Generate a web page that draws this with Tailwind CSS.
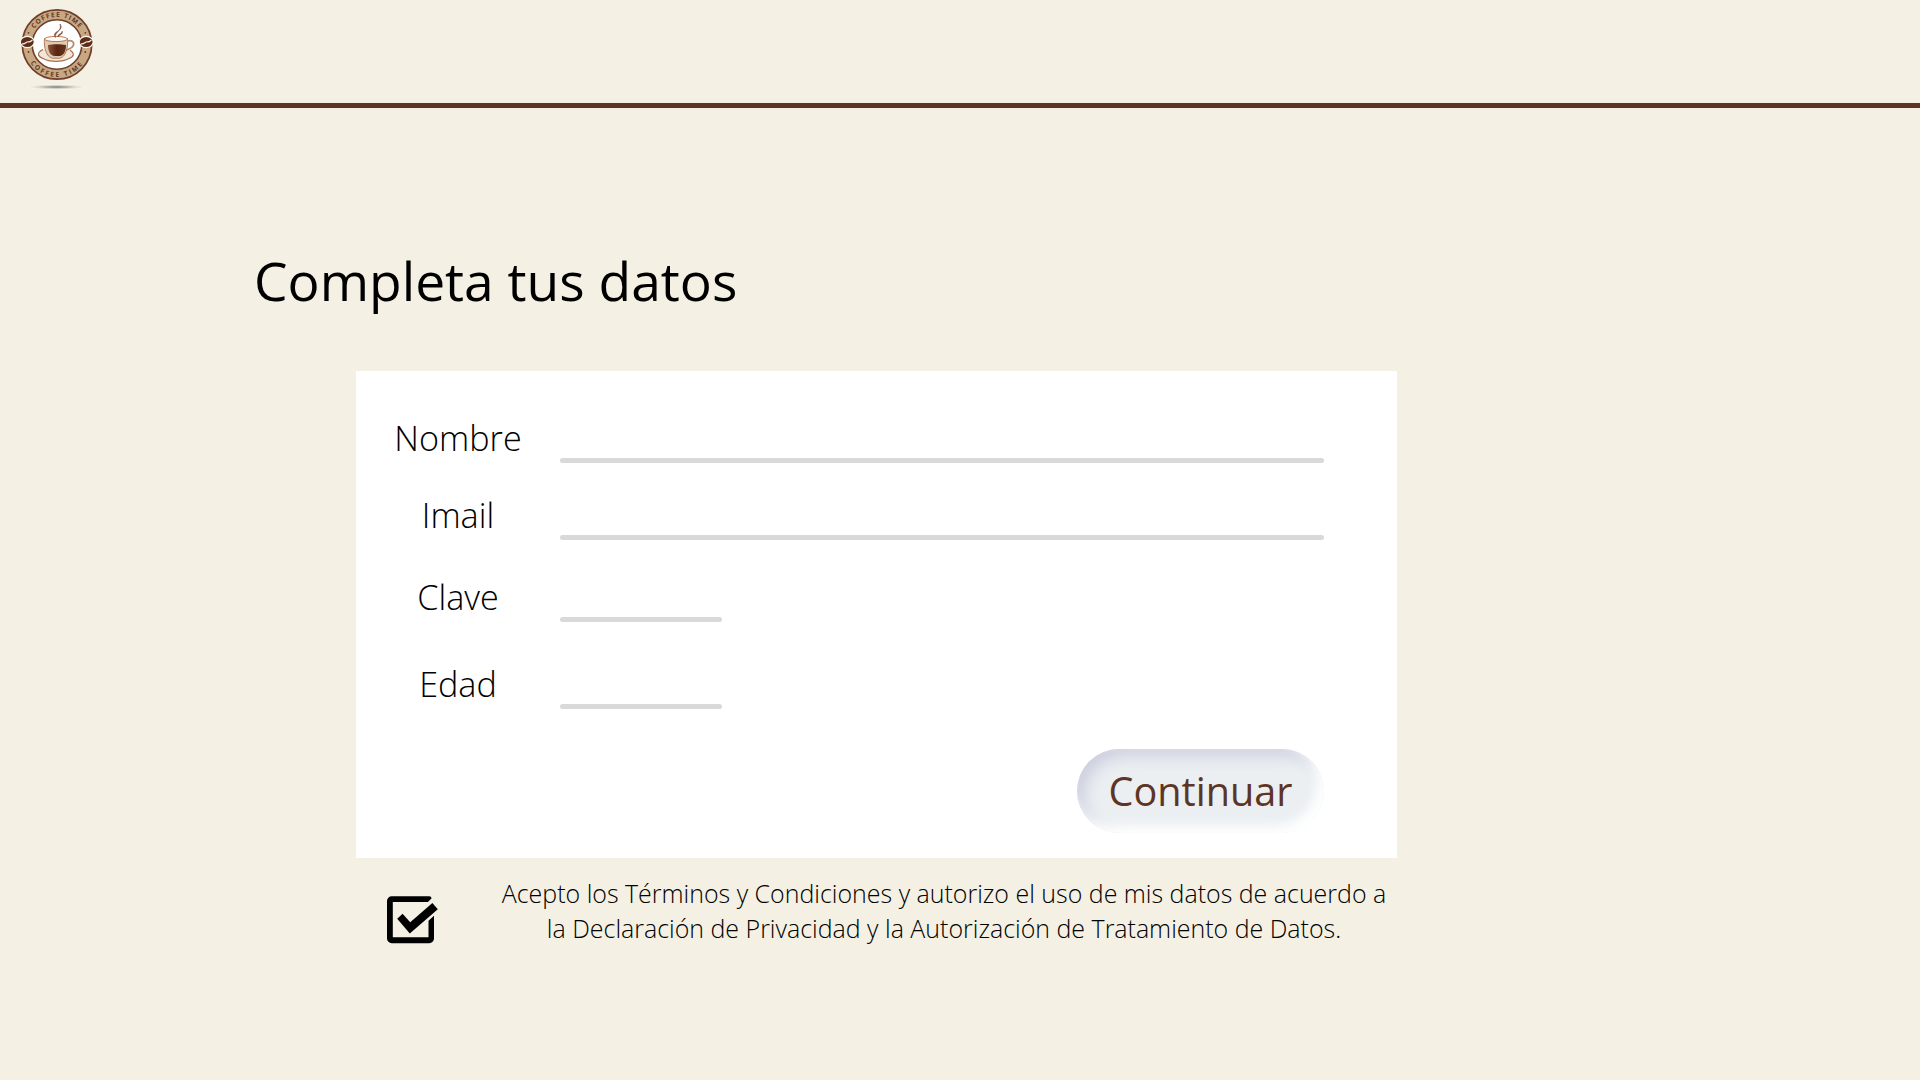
<!DOCTYPE html>
<html lang="es">
<head>
<meta charset="utf-8">
<title>Completa tus datos</title>
<script src="https://cdn.jsdelivr.net/npm/@tailwindcss/browser@4"></script>
</head>
<body class="h-screen overflow-hidden bg-[#f4f0e4] font-['Open_Sans',sans-serif] text-black">
<header class="h-[108px] border-b-5 border-[#5e3425] pl-4">
<svg class="h-[98px] w-[84px]" viewBox="16 0 84 98" role="img" aria-label="Coffee Time">
  <defs>
    <path id="top" d="M29.400 44.500a27.600 27.600 0 0 1 55.200 0"/>
    <path id="bottom" d="M24.500 44.500a32.500 32.500 0 0 0 65 0"/>
    <radialGradient id="shade"><stop offset="0" stop-color="#777a74"/><stop offset=".3" stop-color="#a9aaa3"/><stop offset=".65" stop-color="#dedbd1"/><stop offset="1" stop-color="#f8f5ec"/></radialGradient>
    <linearGradient id="coffee" x1="0" y1="0" x2="1" y2="0"><stop offset="0" stop-color="#8d5437"/><stop offset=".5" stop-color="#562510"/><stop offset="1" stop-color="#67331e"/></linearGradient>
  </defs>
  <ellipse cx="56.500" cy="87" rx="29" ry="2.600" fill="url(#shade)"/>
  <circle cx="57" cy="44.500" r="34.700" fill="#c8a883" stroke="#6f3f2b" stroke-width="1.700"/>
  <circle cx="57" cy="44.500" r="24.800" fill="#fff" stroke="#6f3f2b" stroke-width="1.600"/>
  <g fill="#663824" font-family="Open Sans, sans-serif" font-weight="700" font-size="6.600" text-anchor="middle">
    <text letter-spacing="1.050"><textPath href="#top" startOffset="50%">COFFEE TIME</textPath></text>
    <text letter-spacing="1.900"><textPath href="#bottom" startOffset="50%">COFFEE TIME</textPath></text>
    <circle cx="28.500" cy="32.800" r=".9"/><circle cx="85.300" cy="32.800" r=".9"/>
    <circle cx="28.500" cy="52" r=".9"/><circle cx="85.300" cy="52" r=".9"/>
  </g>
  <g stroke="#faf6ee" fill="#5b2c18">
    <ellipse cx="27.300" cy="42" rx="7" ry="5.600" stroke-width="1.300"/>
    <ellipse cx="86.200" cy="42" rx="7" ry="5.600" stroke-width="1.300"/>
    <path d="M22 43.800c3.500.8 4-2.500 6.500-2 2 .3 2.500-.8 4-1.800M81 43.800c3.500.8 4-2.500 6.500-2 2 .3 2.500-.8 4-1.800" fill="none" stroke-width="1.200"/>
  </g>
  <path d="M43 49.500c-7 3.500-5 7 0 9 7 3.800 19 3.800 26 0 5-2 6-5 1-8.500" fill="#f3e6d7" stroke="#a8704e" stroke-width="1.200"/>
  <path d="M67.500 41c8-2 9 6.500-1.500 9" fill="none" stroke="#b98a68" stroke-width="1.800"/>
  <path d="M44.500 38.500h23c1 9-2 19-8 19.700h-7c-6-.7-9-11-8-19.700z" fill="#e2c8b0" stroke="#a8704e" stroke-width=".9"/>
  <ellipse cx="56" cy="39" rx="11.500" ry="2.600" fill="#fff8f0" stroke="#a8704e" stroke-width=".9"/>
  <path d="M48 45c5-1 13-1 18 0 0 6-2 10-6 11h-6c-4-1-6-5-6-11z" fill="url(#coffee)"/>
  <path d="M55.500 37.500c-4-5 3.500-5.500 4.500-9 .5-1.500.5-2.500 0-4.500 4.500 6-5.500 7-4.500 13.500z" fill="#865039" stroke="#865039" stroke-width=".6"/>
  <path d="M58 37c-1-3 4-3 4.200-6 1.500 3.500-3.500 4-4.200 6z" fill="#865039" stroke="#865039" stroke-width=".5"/>
</svg>
</header>
<main class="pt-[137px]">
  <h1 class="pl-[254px] text-[53.330px] leading-[72px]">Completa tus datos</h1>
  <form class="mt-[54px] ml-[356px] flex h-[487px] w-[1041px] flex-col bg-white pt-[42px] text-[34.200px] font-light">
    <label class="flex h-[50px] items-end"><span class="w-[204px] self-start text-center leading-[50px]">Nombre</span><span class="h-[5px] w-[764px] rounded-full bg-[#d9d9d9]"></span></label>
    <label class="mt-[27px] flex h-[50px] items-end"><span class="w-[204px] self-start text-center leading-[50px]">Imail</span><span class="h-[5px] w-[764px] rounded-full bg-[#d9d9d9]"></span></label>
    <label class="mt-[32px] flex h-[50px] items-end"><span class="w-[204px] self-start text-center leading-[50px]">Clave</span><span class="h-[5px] w-[162px] rounded-full bg-[#d9d9d9]"></span></label>
    <label class="mt-[36.500px] flex h-[50px] items-end"><span class="w-[204px] self-start text-center leading-[50px]">Edad</span><span class="h-[5px] w-[162px] rounded-full bg-[#d9d9d9]"></span></label>
    <button type="button" class="mt-[40.500px] mr-[73px] h-[84px] w-[247px] self-end rounded-full bg-[#ebeff2] pt-[2px] text-[39.600px] font-normal text-[#5e3425] shadow-[inset_-7px_-7px_12px_#ffffff,inset_7px_7px_16px_#cdcfde]">Continuar</button>
  </form>
  <div class="flex pt-[18px] pl-[386px]">
    <svg class="mt-[20px] h-[48px] w-[52px] shrink-0" viewBox="386 896 52 48">
      <path d="M431.600 898.300 428 902h-35.200v35.200h35.700v-16.500l5.500-5V938.500a4.700 4.700 0 0 1-4.700 4.700h-37.600a4.700 4.700 0 0 1-4.700-4.700V901a4.700 4.700 0 0 1 4.700-4.700h37.500c1.300 0 2.200.7 2.400 2z"/>
      <path d="m397.200 918.800 5.400-5 7.600 8.500 22.200-19.300 5.400 6.300-28 24.300z"/>
    </svg>
    <p class="ml-[46px] w-[920px] text-center text-[24.960px] leading-[35px] font-light">Acepto los Términos y Condiciones y autorizo el uso de mis datos de acuerdo a<br>la Declaración de Privacidad y la Autorización de Tratamiento de Datos.</p>
  </div>
</main>
</body>
</html>
